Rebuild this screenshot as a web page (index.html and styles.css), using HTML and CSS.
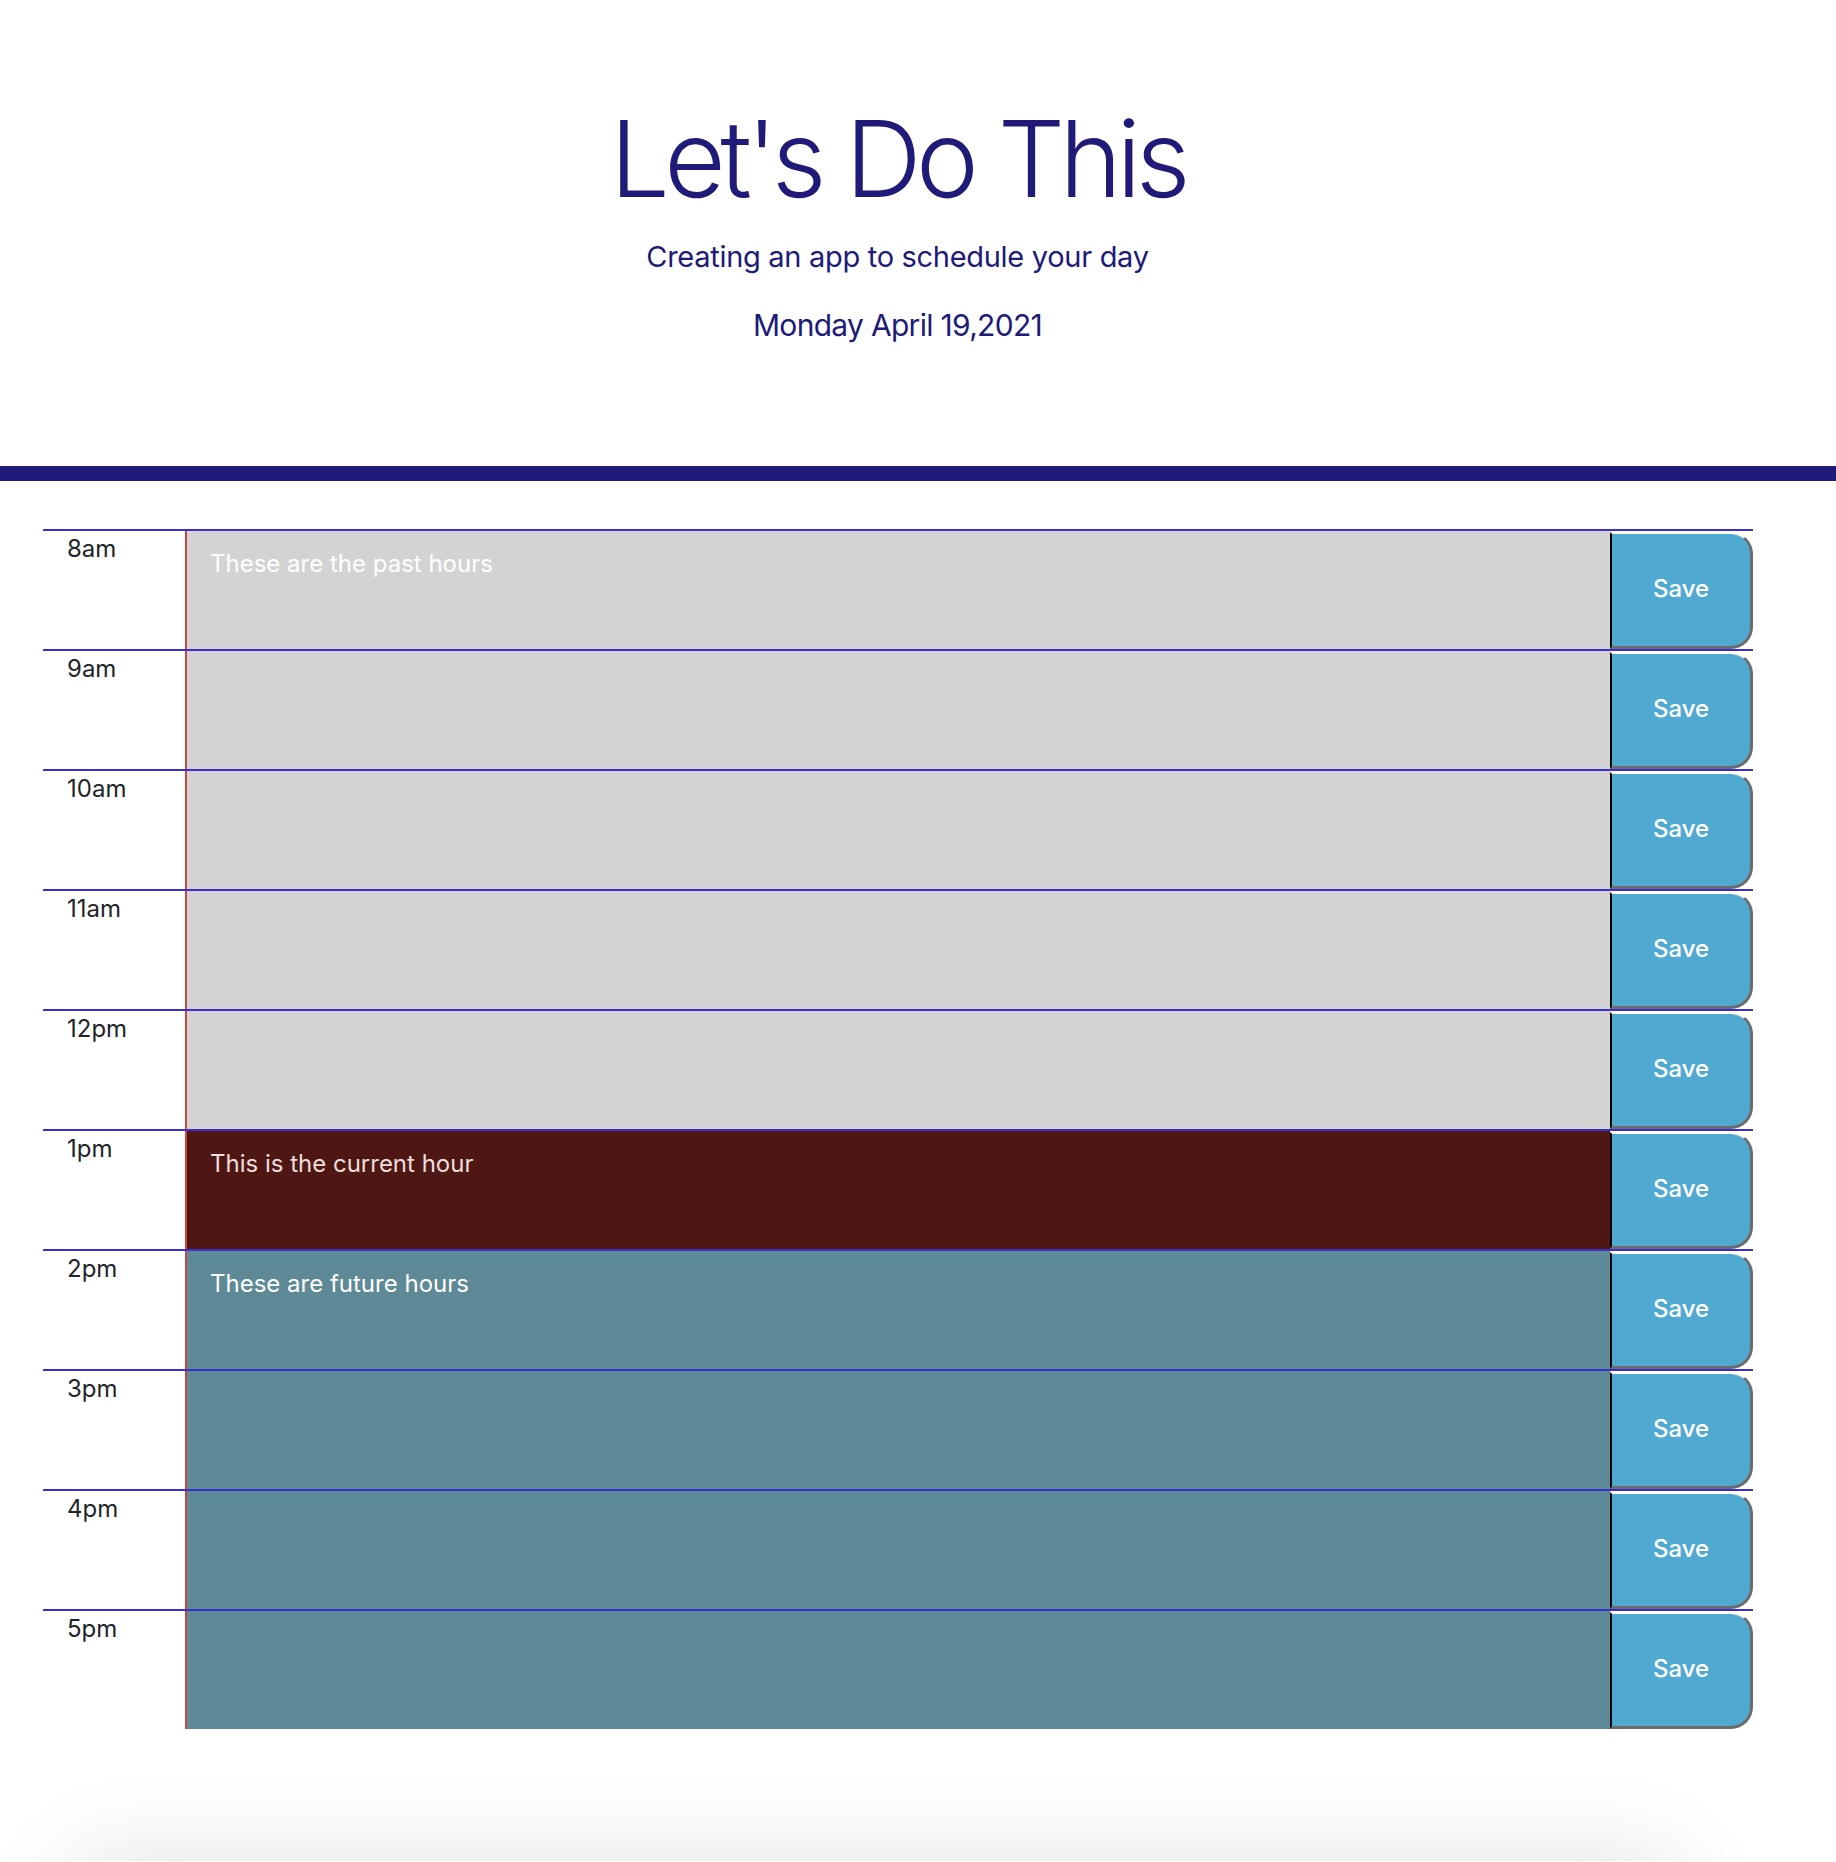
FILE: index.html
```html
<!DOCTYPE html>
<html lang="en">
<head>
<meta charset="utf-8">
<title>Let's Do This</title>
<link rel="stylesheet" href="styles.css">
</head>
<body>
<header class="hero">
  <h1 class="title">Let's Do This</h1>
  <p class="lead">Creating an app to schedule your day</p>
  <p class="today">Monday April 19,2021</p>
</header>

<main class="planner">
  <div class="row"><div class="hour">8am</div><textarea class="desc past">These are the past hours</textarea><button class="save">Save</button></div>
  <div class="row"><div class="hour">9am</div><textarea class="desc past"></textarea><button class="save">Save</button></div>
  <div class="row"><div class="hour">10am</div><textarea class="desc past"></textarea><button class="save">Save</button></div>
  <div class="row"><div class="hour">11am</div><textarea class="desc past"></textarea><button class="save">Save</button></div>
  <div class="row"><div class="hour">12pm</div><textarea class="desc past"></textarea><button class="save">Save</button></div>
  <div class="row"><div class="hour">1pm</div><textarea class="desc present">This is the current hour</textarea><button class="save">Save</button></div>
  <div class="row"><div class="hour">2pm</div><textarea class="desc future">These are future hours</textarea><button class="save">Save</button></div>
  <div class="row"><div class="hour">3pm</div><textarea class="desc future"></textarea><button class="save">Save</button></div>
  <div class="row"><div class="hour">4pm</div><textarea class="desc future"></textarea><button class="save">Save</button></div>
  <div class="row"><div class="hour">5pm</div><textarea class="desc future"></textarea><button class="save">Save</button></div>
</main>

<footer class="footer"><div class="footer-card"></div></footer>
</body>
</html>
```

FILE: styles.css
```css
html, body {
  margin: 0;
  padding: 0;
  background: #ffffff;
}

body {
  font-family: Inter, "Noto Sans", "Liberation Sans", sans-serif;
  color: #212529;
}

.hero {
  text-align: center;
  color: #201a78;
  padding: 99px 41px 123px 0;
  border-bottom: 15px solid #201a78;
}

.title {
  margin: 0;
  font-size: 106px;
  line-height: 120px;
  font-weight: 300;
  letter-spacing: -5.5px;
}

.lead {
  margin: 20px 0 0;
  font-size: 29px;
  line-height: 36px;
  font-weight: 400;
  letter-spacing: -0.3px;
}

.today {
  margin: 32px 0 0;
  font-size: 30px;
  line-height: 36px;
  font-weight: 400;
  letter-spacing: -0.7px;
}

.planner {
  margin: 48px 0 0 43px;
  width: 1710px;
}

.row {
  display: grid;
  grid-template-columns: 142px 1425px 143px;
  height: 120px;
  box-sizing: border-box;
  border-top: 2px solid #3b2dcf;
}

.hour {
  padding: 4px 0 0 24px;
  font-size: 24px;
  line-height: 1.2;
  color: #212529;
}

.desc {
  display: block;
  margin: 0;
  height: 118px;
  box-sizing: border-box;
  border: none;
  border-left: 2px solid #c9473c;
  padding: 19px 23px 17px;
  font-family: inherit;
  font-size: 24px;
  line-height: 1.2;
  color: #ffffff;
  resize: none;
  outline: none;
}

.past {
  background: #d3d3d3;
  color: #ffffff;
}

.present {
  background: #4f1713;
  color: #ecdede;
}

.future {
  background: #5e8996;
  color: #ffffff;
}

.save {
  margin: 1px 0 0;
  height: 117px;
  box-sizing: border-box;
  padding: 0 0 4px;
  background: #50a9d1;
  color: #ffffff;
  font-family: inherit;
  font-size: 24px;
  font-weight: 500;
  border-style: solid;
  border-width: 2px 3px 3px 2px;
  border-color: #ffffff #6b6b6b #6b6b6b #000000;
  border-radius: 0 22px 22px 0;
  cursor: pointer;
}

.footer {
  height: 132px;
  overflow: hidden;
  padding: 0 176px 0 90px;
}

.footer-card {
  margin-top: 150px;
  height: 100px;
  background: #ededed;
  box-shadow: 0 0 100px 10px rgba(0, 0, 0, 0.15);
}
```
